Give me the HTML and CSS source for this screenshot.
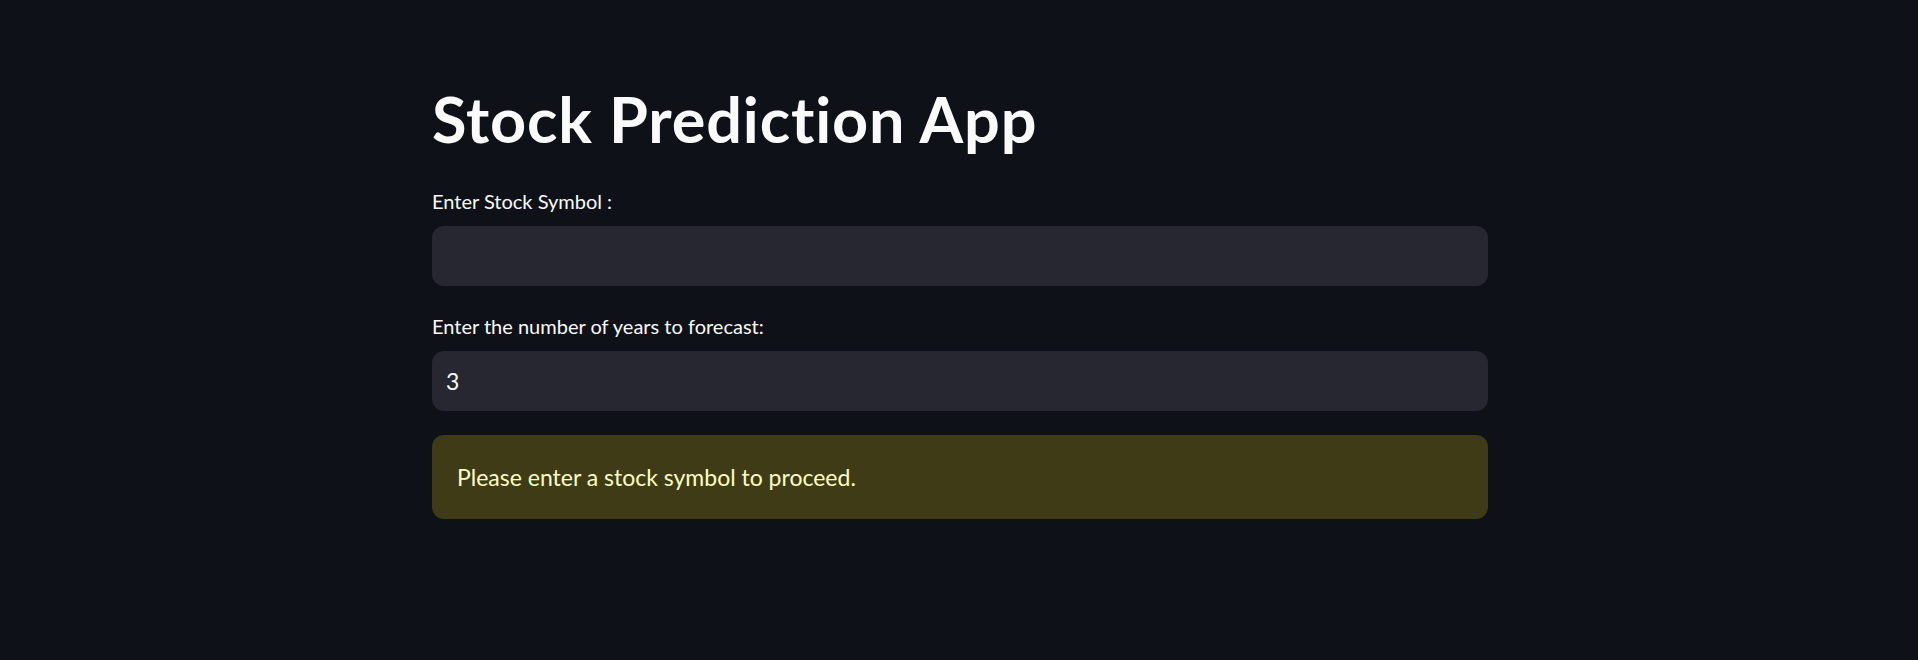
FILE: index.html
```html
<!DOCTYPE html>
<html lang="en">
<head>
<meta charset="utf-8">
<title>Stock Prediction App</title>
<link rel="stylesheet" href="styles.css">
</head>
<body>
<main class="main">
  <h1 class="title">Stock Prediction App</h1>
  <div class="widget first">
    <label class="label" for="sym">Enter Stock Symbol :</label>
    <div class="input"><input id="sym" type="text" value=""></div>
  </div>
  <div class="widget second">
    <label class="label" for="yrs">Enter the number of years to forecast:</label>
    <div class="input"><input id="yrs" type="text" value="3"></div>
  </div>
  <div class="alert">Please enter a stock symbol to proceed.</div>
</main>
</body>
</html>
```

FILE: styles.css
```css
html, body {
  margin: 0;
  padding: 0;
  background: #0e1117;
  height: 100%;
}
body {
  font-family: "Lato", "Noto Sans", sans-serif;
  color: #fafafa;
  font-variant-ligatures: none;
}
.main {
  width: 1056px;
  margin-left: 432px;
  padding-top: 79px;
  display: flex;
  flex-direction: column;
}
.title {
  margin: 0;
  font-size: 63px;
  letter-spacing: 0.85px;
  line-height: 80px;
  height: 80px;
  font-weight: 700;
  color: #fafafa;
}
.widget {
  display: flex;
  flex-direction: column;
  gap: 8px;
}
.widget.first { margin-top: 29px; }
.widget.second { margin-top: 27px; }
.label {
  font-size: 20px;
  line-height: 27px;
  height: 30px;
  color: #fafafa;
}
.input {
  height: 60px;
  background: #262730;
  border-radius: 12px;
  display: flex;
  align-items: center;
}
.input input {
  border: 0;
  outline: 0;
  background: transparent;
  color: #fafafa;
  font-family: inherit;
  font-size: 23px;
  padding: 0 14px;
  width: 100%;
}
.alert {
  margin-top: 24px;
  height: 84px;
  box-sizing: border-box;
  padding: 0 25px;
  display: flex;
  align-items: center;
  background: #3e3b16;
  color: #ffffc2;
  border-radius: 12px;
  font-size: 23px;
}
```
